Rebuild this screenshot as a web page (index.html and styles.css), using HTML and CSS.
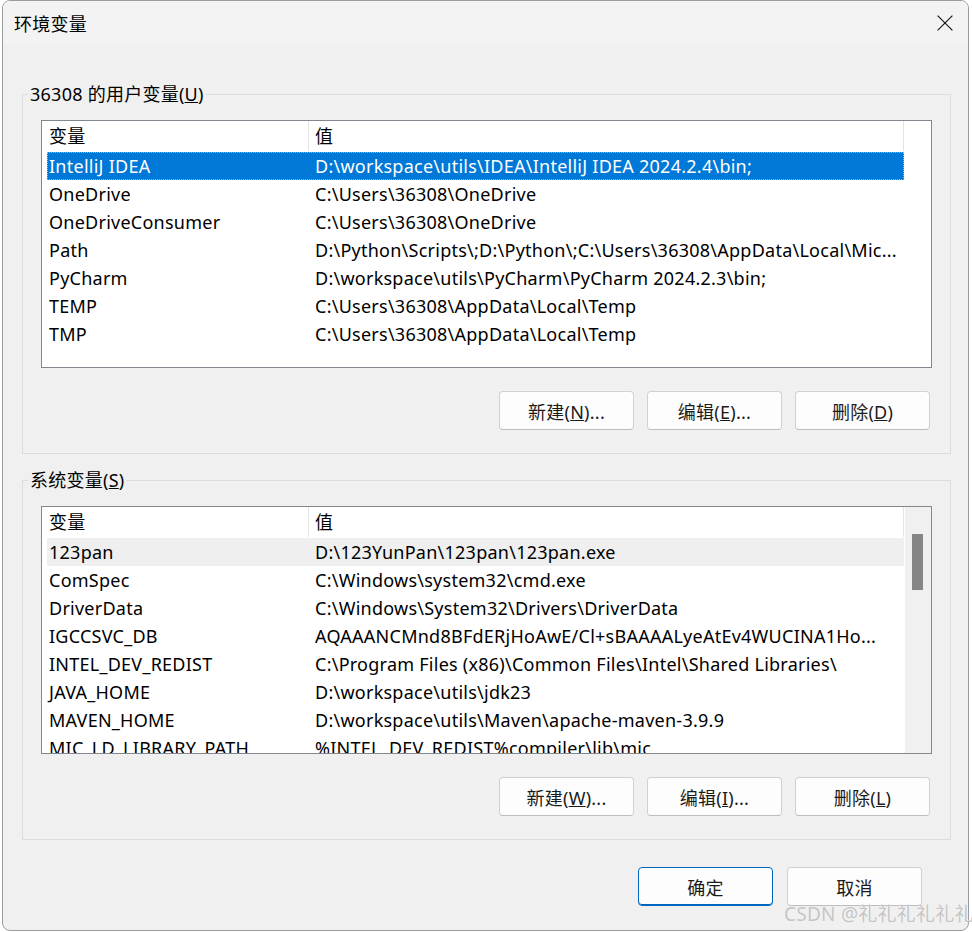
FILE: index.html
```html
<!DOCTYPE html>
<html lang="zh-CN">
<head>
	<meta charset="UTF-8">
	<meta name="viewport" content="width=device-width, initial-scale=1.0">
	<title>环境变量</title>
	<link rel="stylesheet" href="styles.css">
</head>
<body>
	<div class="dialog">
		<div class="title-bar">
			<span class="title">环境变量</span>
			<a href="#" class="btn-close" title="关闭">
				<svg width="16" height="16" viewBox="0 0 16 16"><path d="M0.6 0.6 L15.4 15.4 M15.4 0.6 L0.6 15.4" stroke="#1a1a1a" stroke-width="1.2" fill="none"/></svg>
			</a>
		</div>
		<div class="dialog-body">
			<fieldset class="group">
				<legend class="group-title">36308 的用户变量(<u>U</u>)</legend>
				<div class="list-view">
					<div class="list-main">
						<div class="list-head"><span class="col-name">变量</span><span class="col-value">值</span></div>
						<ul class="list-rows">
							<li class="row selected"><span class="col-name">IntelliJ IDEA</span><span class="col-value">D:\workspace\utils\IDEA\IntelliJ IDEA 2024.2.4\bin;</span></li>
							<li class="row"><span class="col-name">OneDrive</span><span class="col-value">C:\Users\36308\OneDrive</span></li>
							<li class="row"><span class="col-name">OneDriveConsumer</span><span class="col-value">C:\Users\36308\OneDrive</span></li>
							<li class="row"><span class="col-name">Path</span><span class="col-value">D:\Python\Scripts\;D:\Python\;C:\Users\36308\AppData\Local\Mic...</span></li>
							<li class="row"><span class="col-name">PyCharm</span><span class="col-value">D:\workspace\utils\PyCharm\PyCharm 2024.2.3\bin;</span></li>
							<li class="row"><span class="col-name">TEMP</span><span class="col-value">C:\Users\36308\AppData\Local\Temp</span></li>
							<li class="row"><span class="col-name">TMP</span><span class="col-value">C:\Users\36308\AppData\Local\Temp</span></li>
						</ul>
					</div>
				</div>
				<div class="btn-group">
					<button class="btn">新建(<u>N</u>)...</button>
					<button class="btn">编辑(<u>E</u>)...</button>
					<button class="btn">删除(<u>D</u>)</button>
				</div>
			</fieldset>
			<fieldset class="group">
				<legend class="group-title">系统变量(<u>S</u>)</legend>
				<div class="list-view">
					<div class="list-main">
						<div class="list-head"><span class="col-name">变量</span><span class="col-value">值</span></div>
						<ul class="list-rows">
							<li class="row hover"><span class="col-name">123pan</span><span class="col-value">D:\123YunPan\123pan\123pan.exe</span></li>
							<li class="row"><span class="col-name">ComSpec</span><span class="col-value">C:\Windows\system32\cmd.exe</span></li>
							<li class="row"><span class="col-name">DriverData</span><span class="col-value">C:\Windows\System32\Drivers\DriverData</span></li>
							<li class="row"><span class="col-name">IGCCSVC_DB</span><span class="col-value">AQAAANCMnd8BFdERjHoAwE/Cl+sBAAAALyeAtEv4WUCINA1Ho...</span></li>
							<li class="row"><span class="col-name">INTEL_DEV_REDIST</span><span class="col-value">C:\Program Files (x86)\Common Files\Intel\Shared Libraries\</span></li>
							<li class="row"><span class="col-name">JAVA_HOME</span><span class="col-value">D:\workspace\utils\jdk23</span></li>
							<li class="row"><span class="col-name">MAVEN_HOME</span><span class="col-value">D:\workspace\utils\Maven\apache-maven-3.9.9</span></li>
							<li class="row"><span class="col-name">MIC_LD_LIBRARY_PATH</span><span class="col-value">%INTEL_DEV_REDIST%compiler\lib\mic</span></li>
						</ul>
					</div>
					<div class="scrollbar"><div class="scroll-thumb"></div></div>
				</div>
				<div class="btn-group">
					<button class="btn">新建(<u>W</u>)...</button>
					<button class="btn">编辑(<u>I</u>)...</button>
					<button class="btn">删除(<u>L</u>)</button>
				</div>
			</fieldset>
			<div class="dialog-foot">
				<button class="btn btn-primary">确定</button>
				<button class="btn">取消</button>
			</div>
		</div>
	</div>
	<div class="watermark">CSDN @礼礼礼礼礼礼</div>
</body>
</html>
```

FILE: styles.css
```css
*{ box-sizing: border-box;}
body{
	margin: 0; background: #fff; color: #000;
	font-family: "Noto Sans", "Noto Sans CJK SC", sans-serif; font-size: 18px;
	letter-spacing: 0.25px;
}
.dialog{
	width: 967px; height: 931px; margin-left: 2px; overflow: hidden;
	border: 1px solid #9c9c9c; border-radius: 8px; background: #f0f0f0;
}
.title-bar{
	display: flex; align-items: center; justify-content: space-between;
	height: 44px; padding: 0 15px 0 11px; background: #f3f3f3;
}
.btn-close{ display: flex; width: 16px; height: 16px;}
.dialog-body{ padding: 37px 17px 0 19px;}

/* 그룹박스 */
.group{
	min-width: 0; margin: 0; padding: 14px 0 23px;
	border: 1px solid #dcdcdc;
}
.group + .group{ margin-top: 14px;}
.group-title{ margin-left: 5px; padding: 0 2px; line-height: 24px;}

/* 리스트 */
.list-view{
	display: flex; height: 248px; margin: 0 18px; overflow: hidden;
	border: 1px solid #828790; background: #fff;
}
.list-main{ width: 863px; overflow: hidden;}
.list-head{ display: flex; height: 30px; margin-bottom: 1px; line-height: 30px;}
.list-head .col-name{ width: 267px; padding-left: 7px; border-right: 1px solid #e5e5e5;}
.list-head .col-value{ width: 595px; padding-left: 6px; border-right: 1px solid #e5e5e5;}
.list-rows{ list-style: none; margin: 0 1px 0 5px; padding: 0;}
.row{ display: flex; height: 28px; line-height: 28px; white-space: nowrap;}
.row .col-name{ width: 261px; padding-left: 2px;}
.row .col-value{ flex: 1; padding-left: 7px; overflow: hidden;}
.row.selected{
	background: #0078d7; color: #fff;
	outline: 1px dotted #e9a45e; outline-offset: -1px;
}
.row.hover{ background: #efefef;}
.scrollbar{ flex: 1; padding: 27px 0 0 7px; background: #f0f0f0;}
.scroll-thumb{ width: 11px; height: 56px; background: #858585;}

/* 버튼 */
.btn-group{ display: flex; justify-content: flex-end; gap: 13px; margin: 23px 20px 0 0;}
.btn{
	width: 135px; height: 39px; padding: 0;
	font: inherit; letter-spacing: inherit; color: #1b1b1b; background: #fdfdfd;
	border: 1px solid #d1d1d1; border-bottom-color: #bdbdbd; border-radius: 4px;
}
.btn-primary{ border-color: #0067c0; box-shadow: inset 0 -1px 0 #0067c0;}
.dialog-foot{ display: flex; justify-content: flex-end; gap: 14px; margin-top: 27px; padding-right: 29px;}

.watermark{
	position: absolute; left: 784px; top: 902px; line-height: 24px; font-size: 19px;
	color: #c4c4c4; white-space: nowrap; text-shadow: 0 0 1px #fff;
}
```
